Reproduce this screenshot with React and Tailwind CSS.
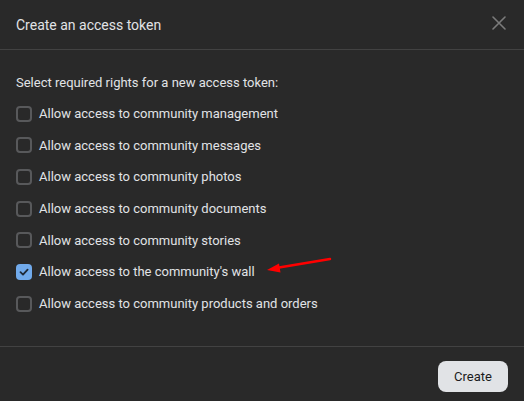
import React from "react";

const items = [
  { label: "Allow access to community management", checked: false },
  { label: "Allow access to community messages", checked: false },
  { label: "Allow access to community photos", checked: false },
  { label: "Allow access to community documents", checked: false },
  { label: "Allow access to community stories", checked: false },
  { label: "Allow access to the community's wall", checked: true },
  { label: "Allow access to community products and orders", checked: false },
];

function Box({ checked }) {
  if (checked) {
    return (
      <span className="w-4 h-4 rounded-[4px] bg-[#71aaeb] flex items-center justify-center shrink-0">
        <svg width="12" height="12" viewBox="0 0 12 12">
          <path d="M2.5 6.2 L5 8.6 L9.6 3.6" fill="none" stroke="#1f2a38" strokeWidth="1.8" strokeLinecap="round" strokeLinejoin="round" />
        </svg>
      </span>
    );
  }
  return <span className="w-4 h-4 rounded-[4px] border-2 border-[#58595b] shrink-0" />;
}

export default function App() {
  return (
    <div className="relative w-[524px] h-[401px] bg-[#292929] flex flex-col text-[#e1e3e6] overflow-hidden" style={{ fontFamily: "Roboto, 'Noto Sans', sans-serif" }}>
      <div className="h-[50px] shrink-0 border-b border-[#424242] flex items-center justify-between pl-4 pr-[18px] pt-[1px]">
        <span className="text-[14px]">Create an access token</span>
        <svg width="14" height="14" viewBox="0 0 14 14" className="mb-[4px]">
          <path d="M1 1 L13 13 M13 1 L1 13" stroke="#7b7b7b" strokeWidth="1.6" strokeLinecap="round" />
        </svg>
      </div>
      <div className="flex-1 px-4 pt-[23px] border-b border-[#424242]">
        <div className="text-[13px] h-[20px] leading-[20px]">Select required rights for a new access token:</div>
        <div className="mt-[5px] flex flex-col">
          {items.map((it, i) => (
            <div key={i} className="h-[31.67px] flex items-center gap-[7px]">
              <Box checked={it.checked} />
              <span className="text-[13px]">{it.label}</span>
            </div>
          ))}
        </div>
      </div>
      <div className="h-[54px] shrink-0 flex justify-end items-start pt-[14px] pr-4">
        <button className="h-[31px] w-[70px] rounded-lg bg-[#e1e3e6] text-[#1c1c1c] text-[13px] flex items-center justify-center">
          Create
        </button>
      </div>
      <svg className="absolute left-[262px] top-[255px]" width="74" height="20" viewBox="0 0 74 20">
        <path d="M68 4 L14 13" stroke="#ff0000" strokeWidth="2.5" strokeLinecap="round" />
        <path d="M5 15 L17 8.5 L18.5 17.5 Z" fill="#ff0000" />
      </svg>
    </div>
  );
}
